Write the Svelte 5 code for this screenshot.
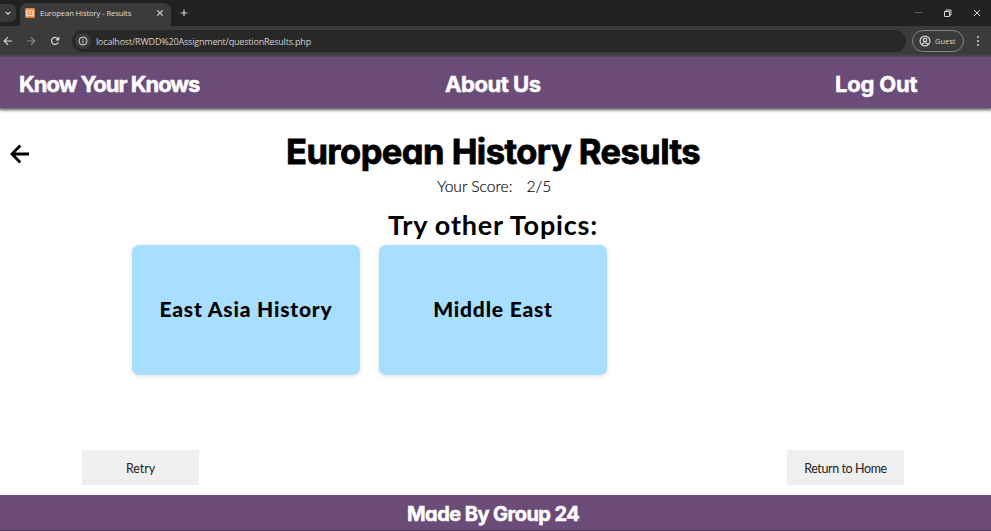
<script>
  const topics = ['East Asia History', 'Middle East'];
</script>

<div class="window">
  <div class="tabs">
    <div class="search"><svg width="8" height="8" viewBox="0 0 8 8"><path d="M1.6 2.8 4 5.2 6.4 2.8" /></svg></div>
    <div class="tab">
      <svg class="fav" width="10" height="10" viewBox="0 0 10 10">
        <rect width="10" height="10" rx="1.2" fill="#e5803f" stroke="none" />
        <path d="M3 2C1.3 2 1.4 4.2 2.6 5 1.3 5.8 1.3 8 3 8 4 8 4.2 7 5 7s1 1 2 1c1.7 0 1.7-2.2.4-3C8.6 4.2 8.7 2 7 2 6 2 5.8 3 5 3S4 2 3 2Z M3.8 5h2.4" stroke="#fff1e5" stroke-width="1.1" />
      </svg>
      <span>European History - Results</span>
      <svg class="close" width="8" height="8" viewBox="0 0 8 8"><path d="m1.3 1.3 5.4 5.4m0-5.4L1.3 6.7" /></svg>
    </div>
    <svg class="plus" width="8" height="8" viewBox="0 0 8 8"><path d="M4 .7v6.6M.7 4h6.6" /></svg>
    <div class="controls">
      <svg width="10" height="10" viewBox="0 0 10 10"><path d="M1 4.500h7" stroke="#666" stroke-width="1" /></svg>
      <svg width="10" height="10" viewBox="0 0 10 10"><path d="M1.500 3.500h5v5h-5zM3 3.500V2h5v5H6.500" stroke-width="1" /></svg>
      <svg width="10" height="10" viewBox="0 0 10 10"><path d="m2 2 6 6m0-6L2 8" stroke-width="1" /></svg>
    </div>
  </div>
  <div class="toolbar">
    <svg width="10" height="10" viewBox="0 0 10 10"><path d="M9 5H1.3M5 1.2 1.2 5 5 8.8" /></svg>
    <svg class="dim" width="10" height="10" viewBox="0 0 10 10"><path d="M1 5h7.7M5 1.2 8.800 5 5 8.800" /></svg>
    <svg class="reload" width="10" height="10" viewBox="0 0 10 10"><path d="M8.300 6.200A3.500 3.500 0 1 1 7.800 2.800L8.700 3.800M8.700 1v2.800H5.900" /></svg>
    <div class="address">
      <div class="info"><svg width="10" height="10" viewBox="0 0 10 10"><circle cx="5" cy="5" r="4" stroke-width="1" /><path d="M5 4.500v2.700M5 2.600v1" stroke-width="1" /></svg></div>
      <span>localhost/RWDD%20Assignment/questionResults.php</span>
    </div>
    <div class="guest">
      <svg width="12" height="12" viewBox="0 0 12 12"><circle cx="6" cy="6" r="4.900" /><circle cx="6" cy="4.900" r="1.700" /><path d="M2.800 9.400c1.500-2 4.900-2 6.400 0" /></svg>
      <span>Guest</span>
    </div>
    <svg class="more" width="4" height="12" viewBox="0 0 4 12"><circle cx="2" cy="2" r="1" /><circle cx="2" cy="6" r="1" /><circle cx="2" cy="10" r="1" /></svg>
  </div>

  <nav>
    <span class="brand">Know Your Knows</span>
    <span class="about">About Us</span>
    <span class="logout">Log Out</span>
  </nav>

  <main>
    <header>
      <svg class="back" width="20" height="20" viewBox="0 0 20 20"><path d="M19 10H2.500M10.300 1.500 2 10l8.300 8.500" /></svg>
      <h1>European History Results</h1>
    </header>
    <p class="score"><span>Your Score:</span><span>2/5</span></p>
    <h2>Try other Topics:</h2>
    <div class="grid">
      {#each topics as topic}
        <div class="card"><span>{topic}</span></div>
      {/each}
    </div>
    <div class="actions">
      <button>Retry</button>
      <button class="home">Return to Home</button>
    </div>
  </main>
  <footer><span>Made By Group 24</span></footer>
</div>

<style>
  .window { width: 991px; height: 531px; display: flex; flex-direction: column; background: #fff; overflow: hidden; font-family: Lato, sans-serif; color: #000; }
  svg { flex: none; display: block; fill: none; stroke: #d5d5d5; stroke-width: 1.2; }
  span, h1, h2 { white-space: nowrap; }
  .tabs { height: 26px; flex: none; display: flex; align-items: center; background: #1f2220; }
  .search { width: 16px; height: 18px; border-radius: 0 6px 6px 0; background: #383938; display: flex; align-items: center; justify-content: center; }
  .search svg { margin-right: 1px; }
  .tab { margin: 3px 0 0 4px; width: 151px; height: 23px; border-radius: 7px 7px 0 0; background: #3b3b3b; display: flex; align-items: center; padding: 0 7px 3px 5px; box-sizing: border-box; color: #dedede; font: 7.7px 'Open Sans', sans-serif; }
  .tab span { margin-left: 5px; letter-spacing: -.13px; }
  .close { margin-left: auto; }
  .plus { margin-left: 9px; }
  .controls { margin-left: auto; display: flex; gap: 19px; padding-right: 9px; }
  .toolbar { height: 30px; flex: none; display: flex; align-items: center; background: #3b3b3b; padding: 0 11px 0 3px; box-sizing: border-box; }
  .dim { margin-left: 13px; opacity: .5; }
  .reload { margin-left: 14px; }
  .address { width: 834px; height: 22px; margin-left: 12px; border-radius: 11px; background: #282826; display: flex; align-items: center; color: #d0d0d0; font: 9px 'Open Sans', sans-serif; }
  .info { margin-left: 3px; width: 16px; height: 16px; border-radius: 50%; background: #3b3b3b; display: flex; align-items: center; justify-content: center; }
  .address span { margin-left: 5px; letter-spacing: -.19px; }
  .guest { width: 52px; height: 22px; box-sizing: border-box; margin-left: 6px; border: 1px solid #858585; border-radius: 11px; display: flex; align-items: center; padding-left: 6px; gap: 4px; color: #d5d5d5; font: 7.5px 'Open Sans', sans-serif; }
  .more { margin-left: 12px; }
  .more circle { fill: #d5d5d5; stroke: none; }
  nav { height: 52px; flex: none; display: grid; grid-template-columns: 426px 390px 1fr; align-items: center; padding: 2px 73px 0 19px; box-sizing: border-box; background: #6b4b78; box-shadow: 0 1px 3px 1px #555; color: #fff; font: 700 22px/30px Inter, sans-serif; font-feature-settings: 'cv11'; border-top: 1px solid #59435f; -webkit-text-stroke: .5px; }
  .brand { letter-spacing: -1px; }
  .about { letter-spacing: -.45px; }
  .logout { letter-spacing: -.2px; }
  main { flex: 1; display: flex; flex-direction: column; min-height: 0; }
  header { display: flex; align-items: center; height: 44px; margin-top: 22px; padding-left: 10px; }
  .back { stroke: #000; stroke-width: 2.8; margin-top: 3px; }
  h1 { margin: 0 0 0 256px; font: 700 34.5px/44px Inter, sans-serif; font-feature-settings: 'cv11'; -webkit-text-stroke: .8px; letter-spacing: -.54px; }
  .score { margin: 1px 0 0 437px; display: flex; gap: 14px; font-size: 15.6px; line-height: 22px; font-weight: 300; -webkit-text-stroke: .15px; }
  h2 { margin: 10px 0 0 388px; font-size: 27px; line-height: 36px; font-weight: 700; letter-spacing: .8px; }
  .grid { display: grid; grid-template-columns: repeat(3, 228px); gap: 19px; margin: 2px 0 0 132px; }
  .card { height: 130px; border-radius: 7px; background: #a8deff; box-shadow: 0 1px 5px #0000001f; display: flex; align-items: center; justify-content: center; box-sizing: border-box; padding-bottom: 3px; font-size: 21px; font-weight: 900; letter-spacing: .8px; }
  .actions { display: flex; justify-content: space-between; padding: 0 87px 10px 82px; margin-top: auto; }
  button { width: 117px; height: 35px; padding: 1px 0 0; border: 0; background: #efefef; color: #222; font: 12.5px Lato, sans-serif; letter-spacing: -.1px; }
  .home { letter-spacing: -.4px; }
  footer { height: 36px; flex: none; box-sizing: border-box; background: #6b4b78; border-bottom: 1px solid #44384a; color: #fff; padding-left: 407px; font: 700 20px/38px Inter, sans-serif; font-feature-settings: 'cv11'; -webkit-text-stroke: .5px; letter-spacing: -.55px; }
</style>
